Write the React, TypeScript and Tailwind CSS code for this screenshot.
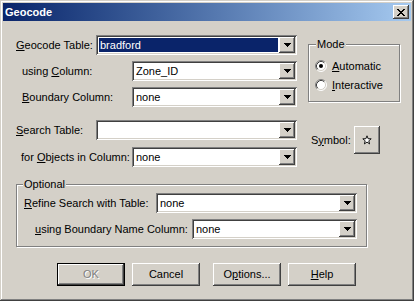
import React from "react";

const sunken =
    "shadow-[inset_1px_1px_#808080,inset_-1px_-1px_#fff,inset_2px_2px_#404040,inset_-2px_-2px_#d4d0c8]";
const raised =
    "shadow-[inset_-1px_-1px_#404040,inset_1px_1px_#fff,inset_-2px_-2px_#808080,inset_2px_2px_#d4d0c8]";

const Arrow = () => (
    <svg width="7" height="4" viewBox="0 0 7 4" shapeRendering="crispEdges">
        <rect x="0" y="0" width="7" height="1" fill="#000" />
        <rect x="1" y="1" width="5" height="1" fill="#000" />
        <rect x="2" y="2" width="3" height="1" fill="#000" />
        <rect x="3" y="3" width="1" height="1" fill="#000" />
    </svg>
);

interface ComboProps {
    value?: string;
    selected?: boolean;
    className: string;
}

// combo box: sunken field + raised drop button
const Combo: React.FC<ComboProps> = ({ value = "", selected, className }) => (
    <div className={`h-[20px] p-[2px] flex bg-white ${sunken} ${className}`}>
        {selected ? (
            <div className="flex-1 m-[1px] pl-[1px] bg-[#0a246a] text-white flex items-center leading-[13px]">{value}</div>
        ) : (
            <div className="flex-1 pl-[2px] flex items-center leading-[13px]">{value}</div>
        )}
        <div className={`w-[16px] h-full bg-[#d4d0c8] flex items-center justify-center ${raised}`}>
            <Arrow />
        </div>
    </div>
);

const U: React.FC<{ children: React.ReactNode }> = ({ children }) => <span className="underline">{children}</span>;

const Radio: React.FC<{ checked?: boolean }> = ({ checked }) => (
    <svg width="12" height="12" viewBox="0 0 12 12">
        <circle cx="6" cy="6" r="5" fill="#fff" />
        <path d="M2.11 9.89 A5.5 5.5 0 0 1 9.89 2.11" stroke="#808080" fill="none" />
        <path d="M9.89 2.11 A5.5 5.5 0 0 1 2.11 9.89" stroke="#fff" fill="none" />
        <path d="M2.82 9.18 A4.5 4.5 0 0 1 9.18 2.82" stroke="#404040" fill="none" />
        <path d="M9.18 2.82 A4.5 4.5 0 0 1 2.82 9.18" stroke="#d4d0c8" fill="none" />
        {checked && <circle cx="6" cy="6" r="2" fill="#000" />}
    </svg>
);

const Button: React.FC<{ children: React.ReactNode; className?: string; def?: boolean }> = ({ children, className = "", def }) => (
    <div
        className={`w-[68px] h-[23px] flex items-center justify-center bg-[#d4d0c8] ${
            def ? "border border-black" : ""
        } ${raised} ${className}`}
    >
        {children}
    </div>
);

const App: React.FC = () => {
    return (
        <div
            className="w-[414px] h-[301px] p-[3px] flex flex-col bg-[#d4d0c8] text-[11px] leading-[13px] text-black shadow-[inset_-1px_-1px_#404040,inset_1px_1px_#d4d0c8,inset_-2px_-2px_#808080,inset_2px_2px_#fff]"
            style={{ fontFamily: '"Liberation Sans", Arial, sans-serif' }}
        >
            {/* title bar */}
            <div className="h-[18px] flex items-center justify-between bg-linear-to-r from-[#0a246a] to-[#a6caf0]">
                <span className="pl-[2px] text-white font-bold text-[11px]">Geocode</span>
                <div className={`w-[16px] h-[14px] mr-[2px] bg-[#d4d0c8] flex items-center justify-center ${raised}`}>
                    <svg width="8" height="7" viewBox="0 0 8 7" shapeRendering="crispEdges">
                        <path
                            d="M0 0h2v1H0zM6 0h2v1H6zM1 1h2v1H1zM5 1h2v1H5zM2 2h4v1H2zM3 3h2v1H3zM2 4h4v1H2zM1 5h2v1H1zM5 5h2v1H5zM0 6h2v1H0zM6 6h2v1H6z"
                            fill="#000"
                        />
                    </svg>
                </div>
            </div>

            {/* body */}
            <div className="flex-1 flex flex-col pl-[13px]">
                <div className="mt-[14px] flex items-start">
                    <div className="w-[281px] flex flex-col gap-[6px]">
                        <div className="h-[20px] flex items-center">
                            <span className="w-[80px]">
                                <U>G</U>eocode Table:
                            </span>
                            <Combo className="w-[201px]" value="bradford" selected />
                        </div>
                        <div className="h-[20px] flex items-center">
                            <span className="w-[116px] pl-[6px]">
                                using <U>C</U>olumn:
                            </span>
                            <Combo className="w-[165px]" value="Zone_ID" />
                        </div>
                        <div className="h-[20px] flex items-center">
                            <span className="w-[116px] pl-[6px]">
                                <U>B</U>oundary Column:
                            </span>
                            <Combo className="w-[165px]" value="none" />
                        </div>
                    </div>

                    {/* Mode group */}
                    <div className="relative ml-[11px] mt-[9px] w-[92px] h-[58px] border border-[#808080] shadow-[inset_1px_1px_#fff,1px_1px_#fff] pt-[13px] pl-[6px] flex flex-col gap-[3px]">
                        <span className="absolute -top-[7px] left-[7px] px-[1px] bg-[#d4d0c8]">Mode</span>
                        <div className="h-[16px] flex items-center">
                            <Radio checked />
                            <span className="ml-[5px]">
                                <U>A</U>utomatic
                            </span>
                        </div>
                        <div className="h-[16px] flex items-center">
                            <Radio />
                            <span className="ml-[5px]">
                                <U>I</U>nteractive
                            </span>
                        </div>
                    </div>
                </div>

                <div className="mt-[13px] flex items-start">
                    <div className="w-[281px] flex flex-col gap-[7px]">
                        <div className="h-[20px] flex items-center">
                            <span className="w-[80px]">
                                <U>S</U>earch Table:
                            </span>
                            <Combo className="w-[201px]" />
                        </div>
                        <div className="h-[20px] flex items-center">
                            <span className="w-[116px] pl-[5px]">
                                for <U>O</U>bjects in Column:
                            </span>
                            <Combo className="w-[165px]" value="none" />
                        </div>
                    </div>
                    <div className="ml-[14px] mt-[6px] h-[28px] flex items-center">
                        <span className="w-[43px]">
                            S<U>y</U>mbol:
                        </span>
                        <div className={`w-[26px] h-[28px] flex items-center justify-center bg-[#d4d0c8] ${raised}`}>
                            <svg width="10" height="10" viewBox="0 0 10 10">
                                <path
                                    d="M5 0.8 L6.1 3.7 L9.2 3.8 L6.8 5.8 L7.6 8.9 L5 7.1 L2.4 8.9 L3.2 5.8 L0.8 3.8 L3.9 3.7 Z"
                                    fill="#fff"
                                    stroke="#000"
                                    strokeWidth="0.9"
                                    strokeLinejoin="miter"
                                />
                            </svg>
                        </div>
                    </div>
                </div>

                {/* Optional group */}
                <div className="relative mt-[17px] w-[351px] h-[63px] border border-[#808080] shadow-[inset_1px_1px_#fff,1px_1px_#fff] pt-[8px] pl-[7px] flex flex-col gap-[6px]">
                    <span className="absolute -top-[7px] left-[6px] px-[1px] bg-[#d4d0c8]">Optional</span>
                    <div className="h-[20px] flex items-center">
                        <span className="w-[132px]">
                            <U>R</U>efine Search with Table:
                        </span>
                        <Combo className="w-[201px]" value="none" />
                    </div>
                    <div className="h-[20px] flex items-center">
                        <span className="w-[168px] pl-[11px]">
                            <U>u</U>sing Boundary Name Column:
                        </span>
                        <Combo className="w-[165px]" value="none" />
                    </div>
                </div>

                {/* buttons */}
                <div className="mt-[16px] flex">
                    <Button def className="ml-[41px]">
                        <span className="text-[#808080] [text-shadow:1px_1px_0_#fff]">OK</span>
                    </Button>
                    <Button className="ml-[7px]">Cancel</Button>
                    <Button className="ml-[13px]">
                        <span>
                            O<U>p</U>tions...
                        </span>
                    </Button>
                    <Button className="ml-[7px]">
                        <span>
                            <U>H</U>elp
                        </span>
                    </Button>
                </div>
            </div>
        </div>
    );
};

export default App;
